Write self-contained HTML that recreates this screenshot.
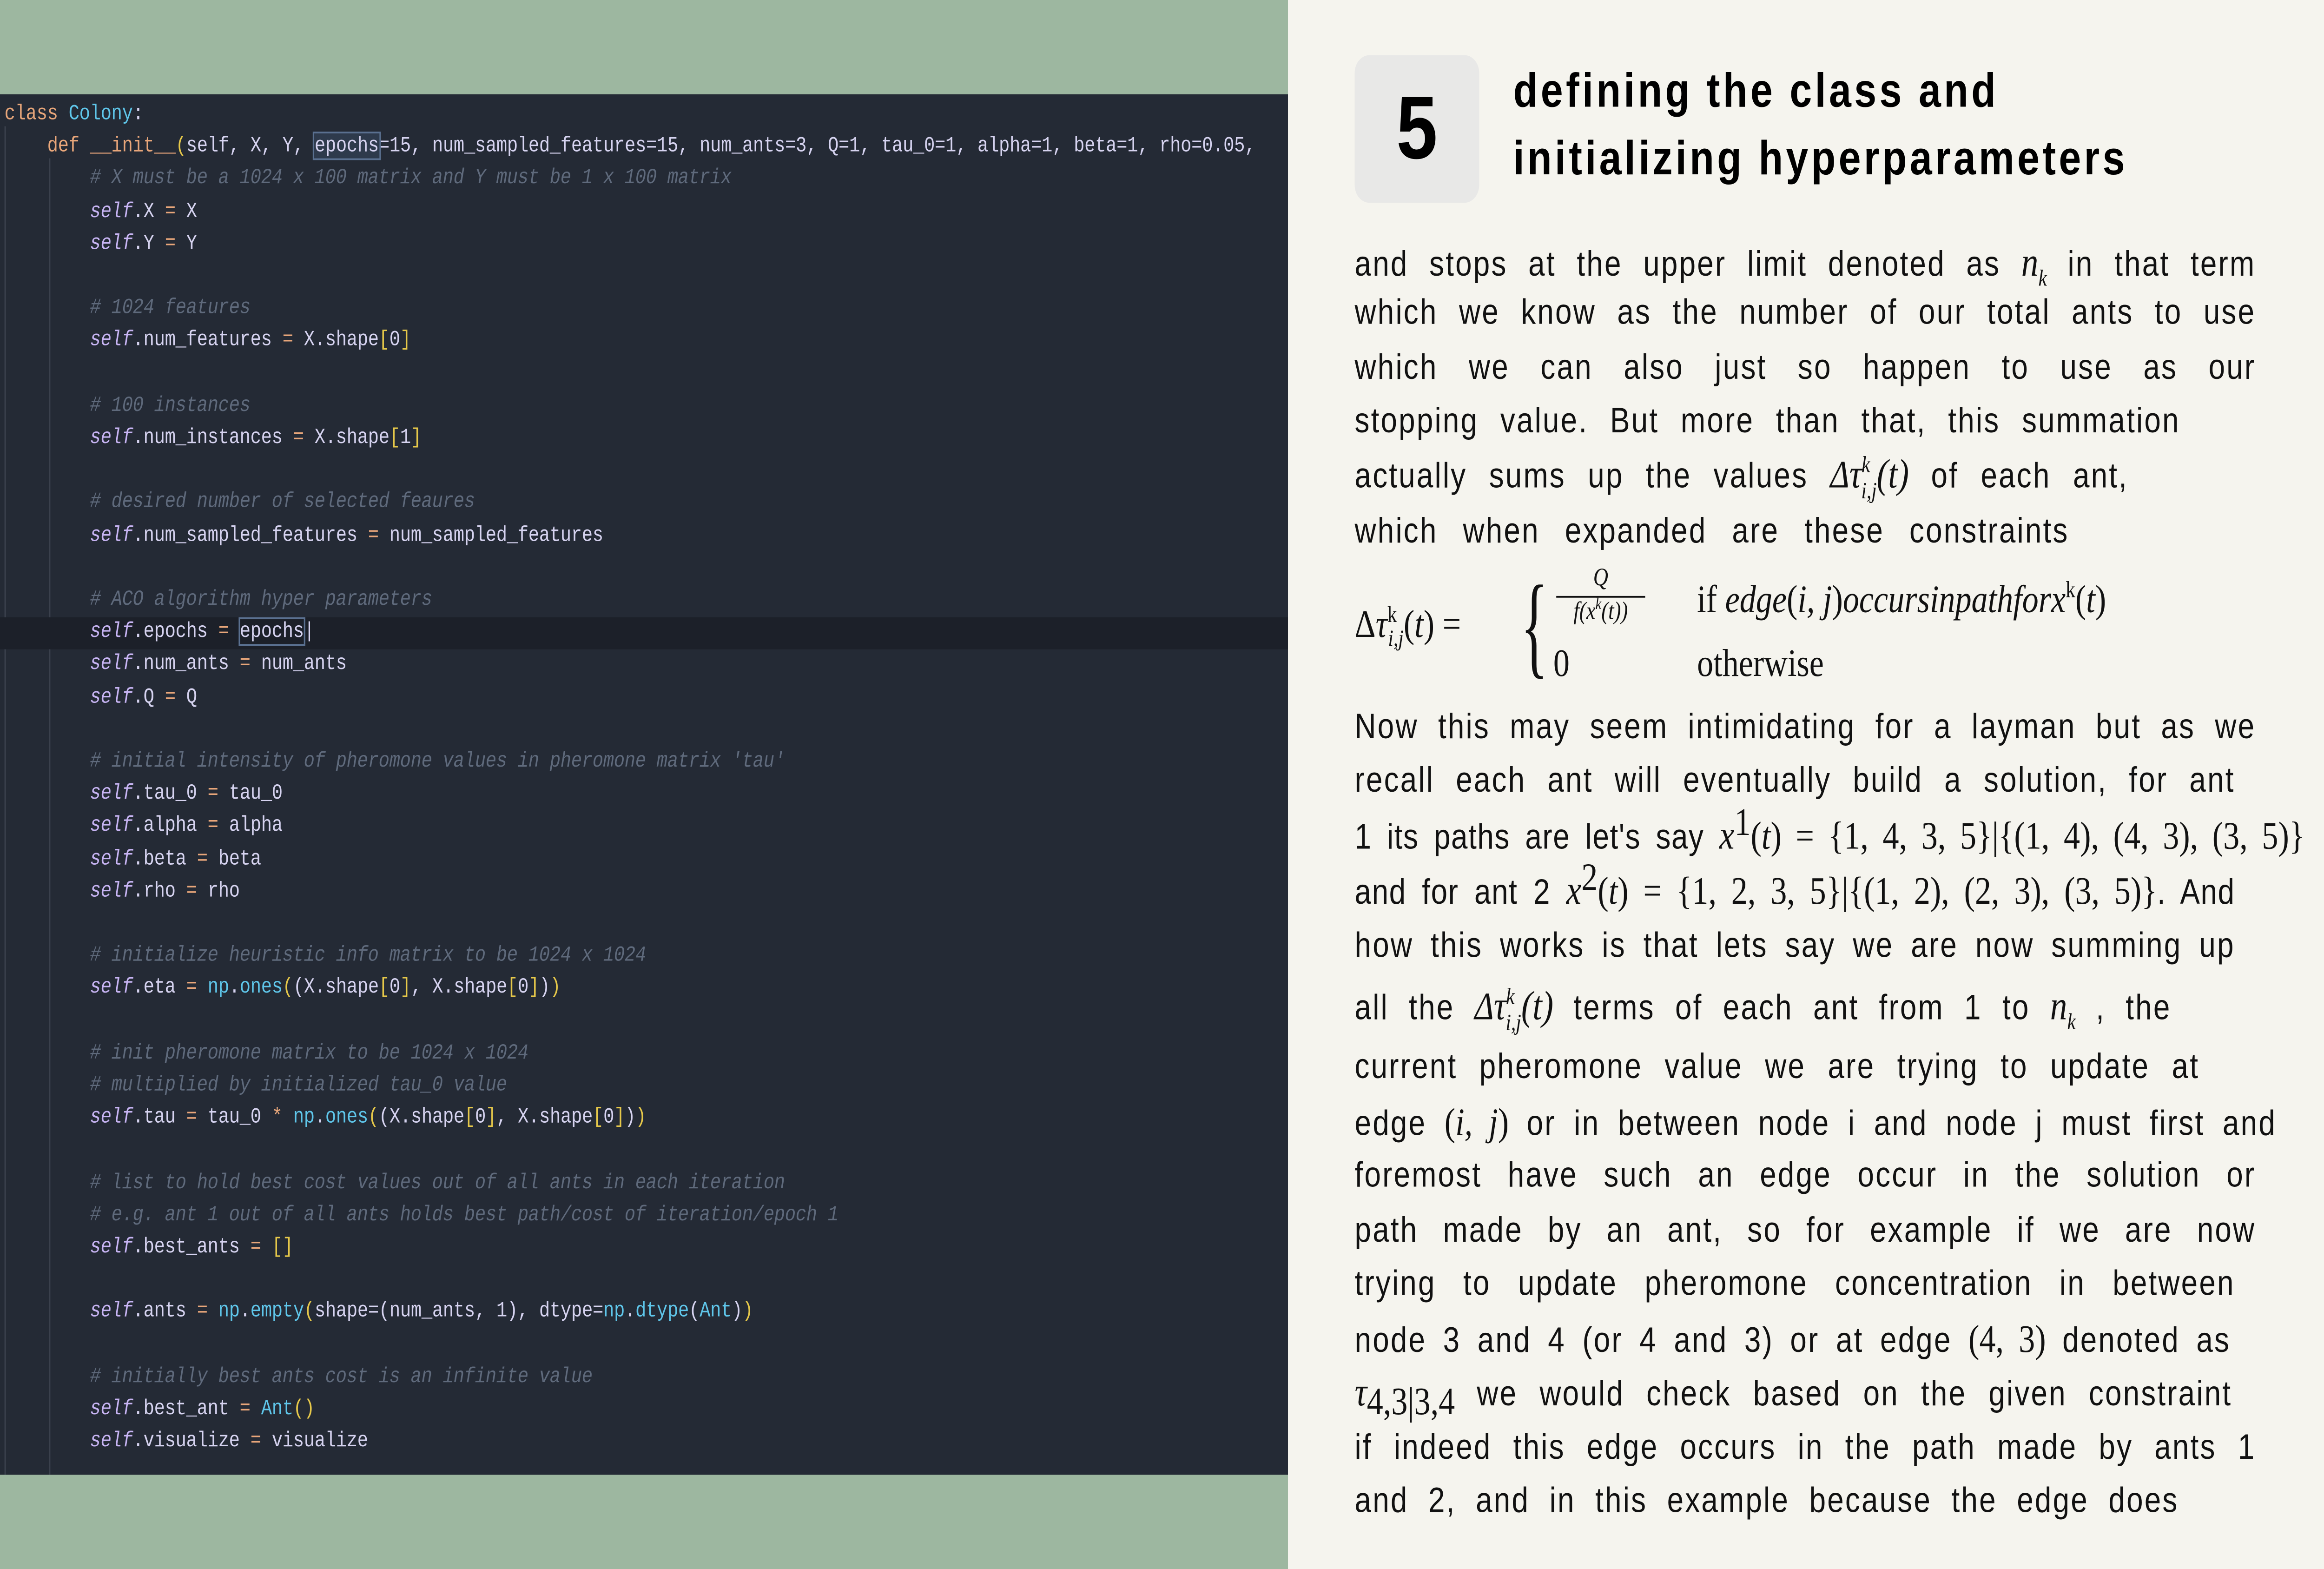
<!DOCTYPE html>
<html><head><meta charset="utf-8"><style>
html,body{margin:0;padding:0;width:100%;height:100%;overflow:hidden;background:#f5f4ee}
#s{position:absolute;left:0;top:0;width:1568px;height:882px;transform:scale(3.82653);transform-origin:0 0}
#left{position:absolute;left:0;top:0;width:869px;height:882px;background:#9db7a0}
#ed{position:absolute;left:0;top:53px;width:869px;height:776px;background:#242a35;overflow:hidden}
.g{position:absolute;top:18px;bottom:0;width:1px;background:#3a404c}
.ln{position:absolute;left:0;width:869px;height:18.2px;line-height:18.2px;font-family:"Liberation Mono",monospace;font-size:12.2px;color:#d6d3f0;white-space:pre;padding-left:3px;box-sizing:border-box;letter-spacing:-0.1px}
.k{color:#e8a67a}.c{color:#5fc6ea}.sf{color:#c7b4f3;font-style:italic}.cm{color:#5f6a7c;font-style:italic}.b{color:#e6c84a}.o{color:#e8a67a}
#right{position:absolute;left:869px;top:0;width:699px;height:882px;background:#f5f4ee}
#box{position:absolute;left:914px;top:31px;width:84px;height:83px;background:#e8e8e7;border-radius:10px;font:bold 50px "Liberation Sans",sans-serif;text-align:center;line-height:83px;color:#000}
.h{position:absolute;left:1021px;font:bold 27px "Liberation Sans",sans-serif;letter-spacing:2px;color:#000;white-space:nowrap}
.t{position:absolute;left:914px;height:30px;font-family:"Liberation Sans",sans-serif;font-size:20px;line-height:30px;color:#111;text-align:justify;text-align-last:justify;white-space:nowrap;letter-spacing:1px}
.m{font-family:"Liberation Serif",serif;font-style:italic;font-size:23px;letter-spacing:0}
.mr{font-family:"Liberation Serif",serif;font-size:22px;letter-spacing:0}
sub,sup{font-size:13px;line-height:0}
</style></head><body><div id="s">
<div id="left"><div id="ed">
<div class="g" style="left:3px"></div><div class="g" style="left:33px;top:36px"></div>
<div style="position:absolute;left:0;top:294px;width:869px;height:18.2px;background:#1c2029"></div>
<div class="ln" style="top:2px"><span class="k">class</span> <span class="c">Colony</span>:</div>
<div class="ln" style="top:20.2px">    <span class="k">def</span> <span class="o">__init__</span><span class="b">(</span>self, X, Y, <span style="outline:1px solid #5a7090;background:#2e3a4c">epochs</span>=15, num_sampled_features=15, num_ants=3, Q=1, tau_0=1, alpha=1, beta=1, rho=0.05,</div>
<div class="ln cm" style="top:38.4px">        # X must be a 1024 x 100 matrix and Y must be 1 x 100 matrix</div>
<div class="ln" style="top:56.6px">        <span class="sf">self</span>.X <span class="o">=</span> X</div>
<div class="ln" style="top:74.8px">        <span class="sf">self</span>.Y <span class="o">=</span> Y</div>
<div class="ln cm" style="top:111.2px">        # 1024 features</div>
<div class="ln" style="top:129.4px">        <span class="sf">self</span>.num_features <span class="o">=</span> X.shape<span class="b">[</span>0<span class="b">]</span></div>
<div class="ln cm" style="top:165.8px">        # 100 instances</div>
<div class="ln" style="top:184px">        <span class="sf">self</span>.num_instances <span class="o">=</span> X.shape<span class="b">[</span>1<span class="b">]</span></div>
<div class="ln cm" style="top:220.4px">        # desired number of selected feaures</div>
<div class="ln" style="top:238.6px">        <span class="sf">self</span>.num_sampled_features <span class="o">=</span> num_sampled_features</div>
<div class="ln cm" style="top:275px">        # ACO algorithm hyper parameters</div>
<div class="ln" style="top:293.2px">        <span class="sf">self</span>.epochs <span class="o">=</span> <span style="outline:1px solid #5a7090">epochs</span>|</div>
<div class="ln" style="top:311.4px">        <span class="sf">self</span>.num_ants <span class="o">=</span> num_ants</div>
<div class="ln" style="top:329.6px">        <span class="sf">self</span>.Q <span class="o">=</span> Q</div>
<div class="ln cm" style="top:366px">        # initial intensity of pheromone values in pheromone matrix 'tau'</div>
<div class="ln" style="top:384.2px">        <span class="sf">self</span>.tau_0 <span class="o">=</span> tau_0</div>
<div class="ln" style="top:402.4px">        <span class="sf">self</span>.alpha <span class="o">=</span> alpha</div>
<div class="ln" style="top:420.6px">        <span class="sf">self</span>.beta <span class="o">=</span> beta</div>
<div class="ln" style="top:438.8px">        <span class="sf">self</span>.rho <span class="o">=</span> rho</div>
<div class="ln cm" style="top:475.2px">        # initialize heuristic info matrix to be 1024 x 1024</div>
<div class="ln" style="top:493.4px">        <span class="sf">self</span>.eta <span class="o">=</span> <span class="c">np</span>.<span class="c">ones</span><span class="b">(</span>(X.shape<span class="b">[</span>0<span class="b">]</span>, X.shape<span class="b">[</span>0<span class="b">]</span>)<span class="b">)</span></div>
<div class="ln cm" style="top:529.8px">        # init pheromone matrix to be 1024 x 1024</div>
<div class="ln cm" style="top:548px">        # multiplied by initialized tau_0 value</div>
<div class="ln" style="top:566.2px">        <span class="sf">self</span>.tau <span class="o">=</span> tau_0 <span class="o">*</span> <span class="c">np</span>.<span class="c">ones</span><span class="b">(</span>(X.shape<span class="b">[</span>0<span class="b">]</span>, X.shape<span class="b">[</span>0<span class="b">]</span>)<span class="b">)</span></div>
<div class="ln cm" style="top:602.6px">        # list to hold best cost values out of all ants in each iteration</div>
<div class="ln cm" style="top:620.8px">        # e.g. ant 1 out of all ants holds best path/cost of iteration/epoch 1</div>
<div class="ln" style="top:639px">        <span class="sf">self</span>.best_ants <span class="o">=</span> <span class="b">[]</span></div>
<div class="ln" style="top:675.4px">        <span class="sf">self</span>.ants <span class="o">=</span> <span class="c">np</span>.<span class="c">empty</span><span class="b">(</span>shape=(num_ants, 1), dtype=<span class="c">np</span>.<span class="c">dtype</span>(<span class="c">Ant</span>)<span class="b">)</span></div>
<div class="ln cm" style="top:711.8px">        # initially best ants cost is an infinite value</div>
<div class="ln" style="top:730px">        <span class="sf">self</span>.best_ant <span class="o">=</span> <span class="c">Ant</span><span class="b">()</span></div>
<div class="ln" style="top:748.2px">        <span class="sf">self</span>.visualize <span class="o">=</span> visualize</div>
</div></div>
<div id="right"></div>
<div id="box">5</div>
<div class="h" style="top:36px">defining the class and</div>
<div class="h" style="top:74px">initializing hyperparameters</div>

<div class="t" style="top:133px;width:608px">and stops at the upper limit denoted as <span class="m">n<sub>k</sub></span> in that term</div>
<div class="t" style="top:161px;width:608px">which we know as the number of our total ants to use</div>
<div class="t" style="top:192px;width:608px">which we can also just so happen to use as our</div>
<div class="t" style="top:222px;width:557px">stopping value. But more than that, this summation</div>
<div class="t" style="top:252px;width:522px">actually sums up the values <span class="m"><span class="mr">Δ</span>τ<sup>k</sup><sub style="margin-left:-6px">i,j</sub>(t)</span> of each ant,</div>
<div class="t" style="top:284px;width:482px">which when expanded are these constraints</div>

<div style="position:absolute;left:914px;top:318px;width:600px;height:72px;font-family:'Liberation Serif',serif;font-size:22px;color:#111">
<div style="position:absolute;left:0;top:20px"><span class="mr">Δ</span><i>τ</i><sup>k</sup><sub style="margin-left:-6px"><i>i,j</i></sub>(<i>t</i>) =</div>
<div style="position:absolute;left:112px;top:-2px;font-size:64px;line-height:72px;transform:scaleX(0.6);transform-origin:0 0">{</div>
<div style="position:absolute;left:136px;top:0;width:60px;text-align:center;font-size:14px;font-style:italic;line-height:16px">Q<div style="border-top:1.5px solid #111;margin:1px 0"></div>f(x<sup style="font-size:9px">k</sup>(t))</div>
<div style="position:absolute;left:134px;top:42px">0</div>
<div style="position:absolute;left:231px;top:6px">if <i>edge</i>(<i>i, j</i>)<i>occursinpathforx</i><sup>k</sup>(<i>t</i>)</div>
<div style="position:absolute;left:231px;top:42px">otherwise</div>
</div>

<div class="t" style="top:394px;width:608px">Now this may seem intimidating for a layman but as we</div>
<div class="t" style="top:424px;width:594px">recall each ant will eventually build a solution, for ant</div>
<div class="t" style="top:455px;width:641px;letter-spacing:0.5px">1 its paths are let's say <span class="m">x</span><sup class="mr">1</sup><span class="mr">(<i>t</i>) = {1, 4, 3, 5}|{(1, 4), (4, 3), (3, 5)}</span></div>
<div class="t" style="top:486px;width:594px;letter-spacing:0.5px">and for ant 2 <span class="m">x</span><sup class="mr">2</sup><span class="mr">(<i>t</i>) = {1, 2, 3, 5}|{(1, 2), (2, 3), (3, 5)}</span>. And</div>
<div class="t" style="top:517px;width:594px">how this works is that lets say we are now summing up</div>
<div class="t" style="top:551px;width:551px">all the <span class="m"><span class="mr">Δ</span>τ<sup>k</sup><sub style="margin-left:-6px">i,j</sub>(t)</span> terms of each ant from 1 to <span class="m">n<sub>k</sub></span> , the</div>
<div class="t" style="top:585px;width:570px">current pheromone value we are trying to update at</div>
<div class="t" style="top:616px;width:622px">edge <span class="mr">(<i>i, j</i>)</span> or in between node i and node j must first and</div>
<div class="t" style="top:646px;width:608px">foremost have such an edge occur in the solution or</div>
<div class="t" style="top:677px;width:608px">path made by an ant, so for example if we are now</div>
<div class="t" style="top:707px;width:594px">trying to update pheromone concentration in between</div>
<div class="t" style="top:738px;width:591px">node 3 and 4 (or 4 and 3) or at edge <span class="mr">(4, 3)</span> denoted as</div>
<div class="t" style="top:768px;width:592px"><span class="m">τ</span><sub class="mr">4,3|3,4</sub> we would check based on the given constraint</div>
<div class="t" style="top:799px;width:608px">if indeed this edge occurs in the path made by ants 1</div>
<div class="t" style="top:829px;width:556px">and 2, and in this example because the edge does</div>
</div>
<script>
(function(){function f(){var w=document.documentElement.clientWidth||window.innerWidth||6000;var h=document.documentElement.clientHeight||window.innerHeight||3375;document.getElementById('s').style.transform='scale('+(w/1568)+','+(h/882)+')';}f();window.addEventListener('resize',f);})();
</script>
</body></html>
